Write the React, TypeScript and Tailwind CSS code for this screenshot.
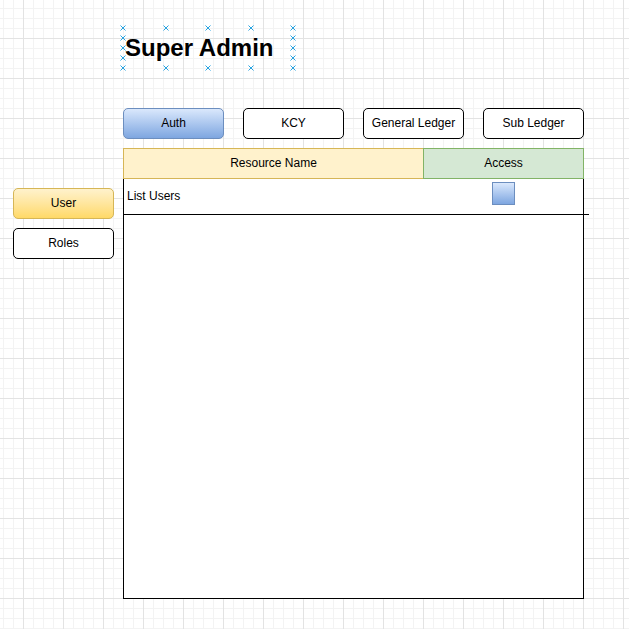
const handleSpots = [
  "left-[0px] top-[0px]",
  "left-[43px] top-[0px]",
  "left-[85px] top-[0px]",
  "left-[128px] top-[0px]",
  "left-[170px] top-[0px]",
  "left-[0px] top-[10px]",
  "left-[170px] top-[10px]",
  "left-[0px] top-[20px]",
  "left-[170px] top-[20px]",
  "left-[0px] top-[30px]",
  "left-[170px] top-[30px]",
  "left-[0px] top-[40px]",
  "left-[43px] top-[40px]",
  "left-[85px] top-[40px]",
  "left-[128px] top-[40px]",
  "left-[170px] top-[40px]",
];

const tabs = ["Auth", "KCY", "General Ledger", "Sub Ledger"];

const Handle = ({ spot }: { spot: string }) => (
  <svg
    width="6"
    height="6"
    viewBox="0 0 6 6"
    className={`absolute -translate-x-1/2 -translate-y-1/2 ${spot}`}
  >
    <path d="M0.5 0.5 L5.5 5.5 M5.5 0.5 L0.5 5.5" stroke="#29a3e0" strokeWidth="1" />
  </svg>
);

export default function App() {
  return (
    <div className="relative w-[629px] h-[629px] overflow-hidden bg-white font-['Liberation_Sans',Arial,sans-serif] text-[12px] text-black [background-image:linear-gradient(to_right,#e3e3e3_1px,transparent_1px),linear-gradient(to_bottom,#e3e3e3_1px,transparent_1px),linear-gradient(to_right,#f3f3f3_1px,transparent_1px),linear-gradient(to_bottom,#f3f3f3_1px,transparent_1px)] [background-size:40px_40px,40px_40px,10px_10px,10px_10px] [background-position:23px_38px,23px_38px,3px_8px,3px_8px]">
      {/* title */}
      <div className="relative ml-[123px] mt-[28px] w-[170px] h-[40px] flex items-center pl-[2px]">
        <span className="text-[24px] font-bold leading-none">Super Admin</span>
        {handleSpots.map((s) => (
          <Handle key={s} spot={s} />
        ))}
      </div>

      <div className="flex mt-[40px]">
        {/* side menu */}
        <div className="ml-[13px] w-[101px] pt-[80px] flex flex-col gap-[9px]">
          <div className="h-[31px] pb-px rounded-[5px] border border-[#d6b656] bg-gradient-to-b from-[#fff2cc] to-[#ffd966] flex items-center justify-center">
            User
          </div>
          <div className="h-[31px] pb-px rounded-[5px] border border-black bg-white flex items-center justify-center">
            Roles
          </div>
        </div>

        {/* main */}
        <div className="ml-[9px] w-[461px]">
          <div className="flex gap-[19px]">
            {tabs.map((t, i) => (
              <div
                key={t}
                className={
                  i === 0
                    ? "w-[101px] h-[31px] pb-px rounded-[5px] border border-[#6c8ebf] bg-gradient-to-b from-[#dae8fc] to-[#7ea6e0] flex items-center justify-center"
                    : "w-[101px] h-[31px] pb-px rounded-[5px] border border-black bg-white flex items-center justify-center"
                }
              >
                {t}
              </div>
            ))}
          </div>

          <div className="mt-[9px] flex h-[31px]">
            <div className="w-[301px] pb-px border border-[#d6b656] bg-[#fff2cc] flex items-center justify-center">
              Resource Name
            </div>
            <div className="w-[161px] pb-px -ml-px border border-[#82b366] bg-[#d5e8d4] flex items-center justify-center">
              Access
            </div>
          </div>

          <div className="relative w-[461px] h-[420px] border-x border-b border-black bg-white">
            <div className="flex h-[35px]">
              <span className="pl-[3px] pb-[2px] self-center">List Users</span>
              <div className="ml-auto mr-[68px] mt-[3px] w-[23px] h-[23px] border border-[#6c8ebf] bg-gradient-to-b from-[#dae8fc] to-[#7ea6e0]" />
            </div>
            <div className="absolute left-[-1px] top-[35px] w-[466px] h-px bg-black" />
          </div>
        </div>
      </div>
    </div>
  );
}
